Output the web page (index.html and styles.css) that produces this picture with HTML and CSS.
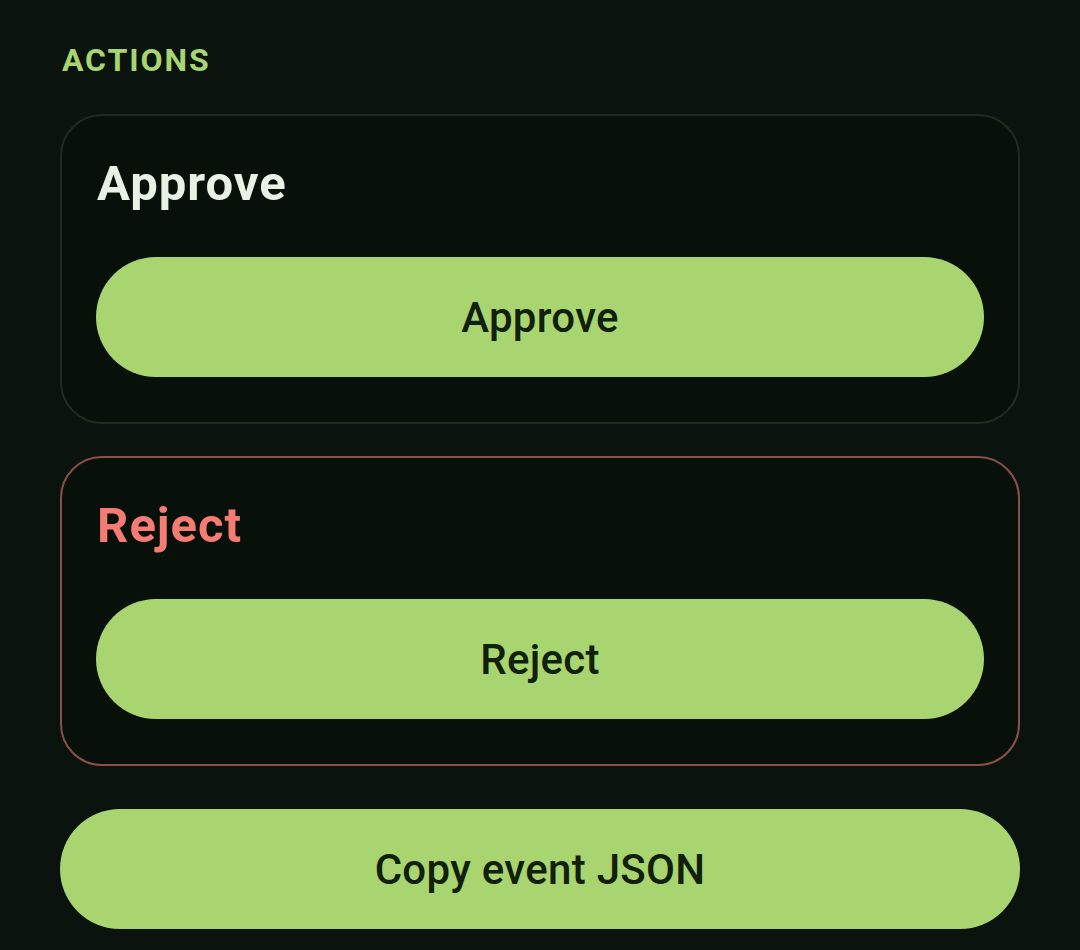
FILE: index.html
```html
<!DOCTYPE html>
<html lang="en">
<head>
<meta charset="utf-8">
<title>Actions</title>
<link rel="stylesheet" href="styles.css">
</head>
<body>
<main class="page">
  <h2 class="section-label">ACTIONS</h2>
  <section class="card">
    <h3 class="card-title">Approve</h3>
    <button class="pill">Approve</button>
  </section>
  <section class="card card-danger">
    <h3 class="card-title card-title-danger">Reject</h3>
    <button class="pill">Reject</button>
  </section>
  <button class="pill pill-wide">Copy event JSON</button>
</main>
</body>
</html>
```
FILE: styles.css
```css
html, body {
  margin: 0;
  padding: 0;
  background: #0a130d;
}
body {
  font-family: Roboto, "Noto Sans", "Liberation Sans", sans-serif;
  width: 1080px;
  height: 950px;
  overflow: hidden;
}
.page {
  padding: 40px 60px 0;
  display: flex;
  flex-direction: column;
}
.section-label {
  margin: 0 0 34px 2px;
  font-size: 32px;
  line-height: 40px;
  font-weight: 700;
  letter-spacing: 1.9px;
  color: #a9d571;
}
.card {
  border: 2px solid #1f2c22;
  border-radius: 42px;
  background: #071009;
  padding: 38px 34px 45px;
  display: flex;
  flex-direction: column;
  margin-bottom: 32px;
}
.card-danger {
  border-color: #8a5046;
  margin-bottom: 43px;
}
.card-title {
  margin: 0 0 43px 1px;
  font-size: 49px;
  line-height: 60px;
  font-weight: 700;
  letter-spacing: 1px;
  color: #e8f2e4;
}
.card-title-danger {
  color: #f57b73;
}
.pill {
  height: 120px;
  border: none;
  border-radius: 60px;
  background: #a9d571;
  color: #112008;
  font-family: Roboto, "Noto Sans", "Liberation Sans", sans-serif;
  font-size: 42px;
  font-weight: 500;
  letter-spacing: 0.3px;
  padding: 0;
}
.pill-wide {
  width: 100%;
}
```
